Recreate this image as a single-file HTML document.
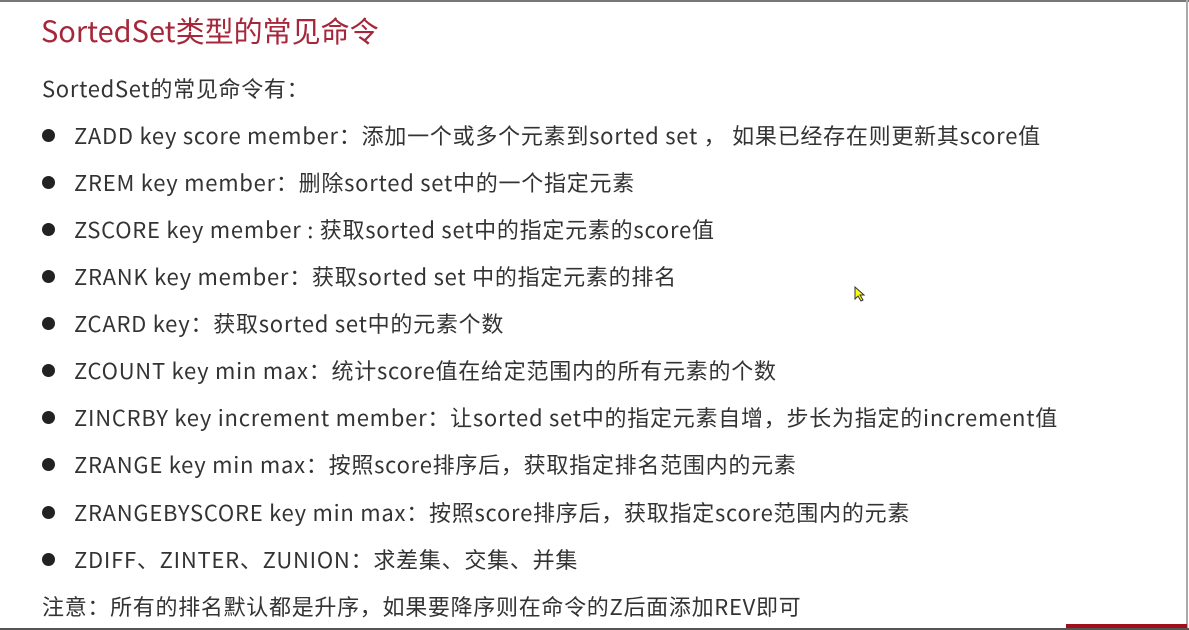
<!DOCTYPE html>
<html><head><meta charset="utf-8"><style>
html,body{margin:0;padding:0;}
body{width:1189px;height:630px;position:relative;overflow:hidden;background:#fff;font-family:"Noto Sans CJK SC","Liberation Sans",sans-serif;color:#333;}
.top{position:absolute;left:0;top:0;width:1189px;height:2px;background:#777;}
.right{position:absolute;right:1px;top:0;width:2px;height:630px;background:#aaa;}
.bot{position:absolute;left:0;bottom:0;width:1189px;height:2px;background:#555;}
.red{position:absolute;left:1066px;bottom:2px;width:121px;height:4px;background:#a0101c;}
.title{position:absolute;left:41px;top:10px;font-size:29px;color:#a6273a;line-height:40px;white-space:nowrap;}
.l{position:absolute;left:42px;font-size:22px;letter-spacing:0.7px;line-height:30px;white-space:nowrap;}
.b{position:absolute;left:42px;width:13px;height:13px;border-radius:50%;background:#222;}
.t{position:absolute;left:74px;font-size:22px;letter-spacing:0.75px;line-height:30px;white-space:nowrap;}
</style></head><body>
<div class="top"></div><div class="right"></div><div class="bot"></div><div class="red"></div>
<div class="title">SortedSet类型的常见命令</div>
<div class="l" style="top:73px">SortedSet的常见命令有：</div>
<div class="b" style="top:129px"></div><div class="t" style="top:120px">ZADD key score member：添加一个或多个元素到sorted set ， 如果已经存在则更新其score值</div>
<div class="b" style="top:176px"></div><div class="t" style="top:167px">ZREM key member：删除sorted set中的一个指定元素</div>
<div class="b" style="top:223px"></div><div class="t" style="top:214px">ZSCORE key member : 获取sorted set中的指定元素的score值</div>
<div class="b" style="top:270px"></div><div class="t" style="top:261px">ZRANK key member：获取sorted set 中的指定元素的排名</div>
<div class="b" style="top:317px"></div><div class="t" style="top:308px">ZCARD key：获取sorted set中的元素个数</div>
<div class="b" style="top:364px"></div><div class="t" style="top:355px">ZCOUNT key min max：统计score值在给定范围内的所有元素的个数</div>
<div class="b" style="top:411px"></div><div class="t" style="top:402px">ZINCRBY key increment member：让sorted set中的指定元素自增，步长为指定的increment值</div>
<div class="b" style="top:458px"></div><div class="t" style="top:449px">ZRANGE key min max：按照score排序后，获取指定排名范围内的元素</div>
<div class="b" style="top:506px"></div><div class="t" style="top:497px">ZRANGEBYSCORE key min max：按照score排序后，获取指定score范围内的元素</div>
<div class="b" style="top:553px"></div><div class="t" style="top:544px">ZDIFF、ZINTER、ZUNION：求差集、交集、并集</div>
<div class="l" style="top:591px">注意：所有的排名默认都是升序，如果要降序则在命令的Z后面添加REV即可</div>
<svg style="position:absolute;left:854px;top:286px" width="12" height="16" viewBox="0 0 12 16"><path d="M1 1 L1 13 L4 10 L7 15 L9 14 L6 9 L10 9 Z" fill="#ff0" stroke="#333" stroke-width="1"/></svg>
</body></html>
